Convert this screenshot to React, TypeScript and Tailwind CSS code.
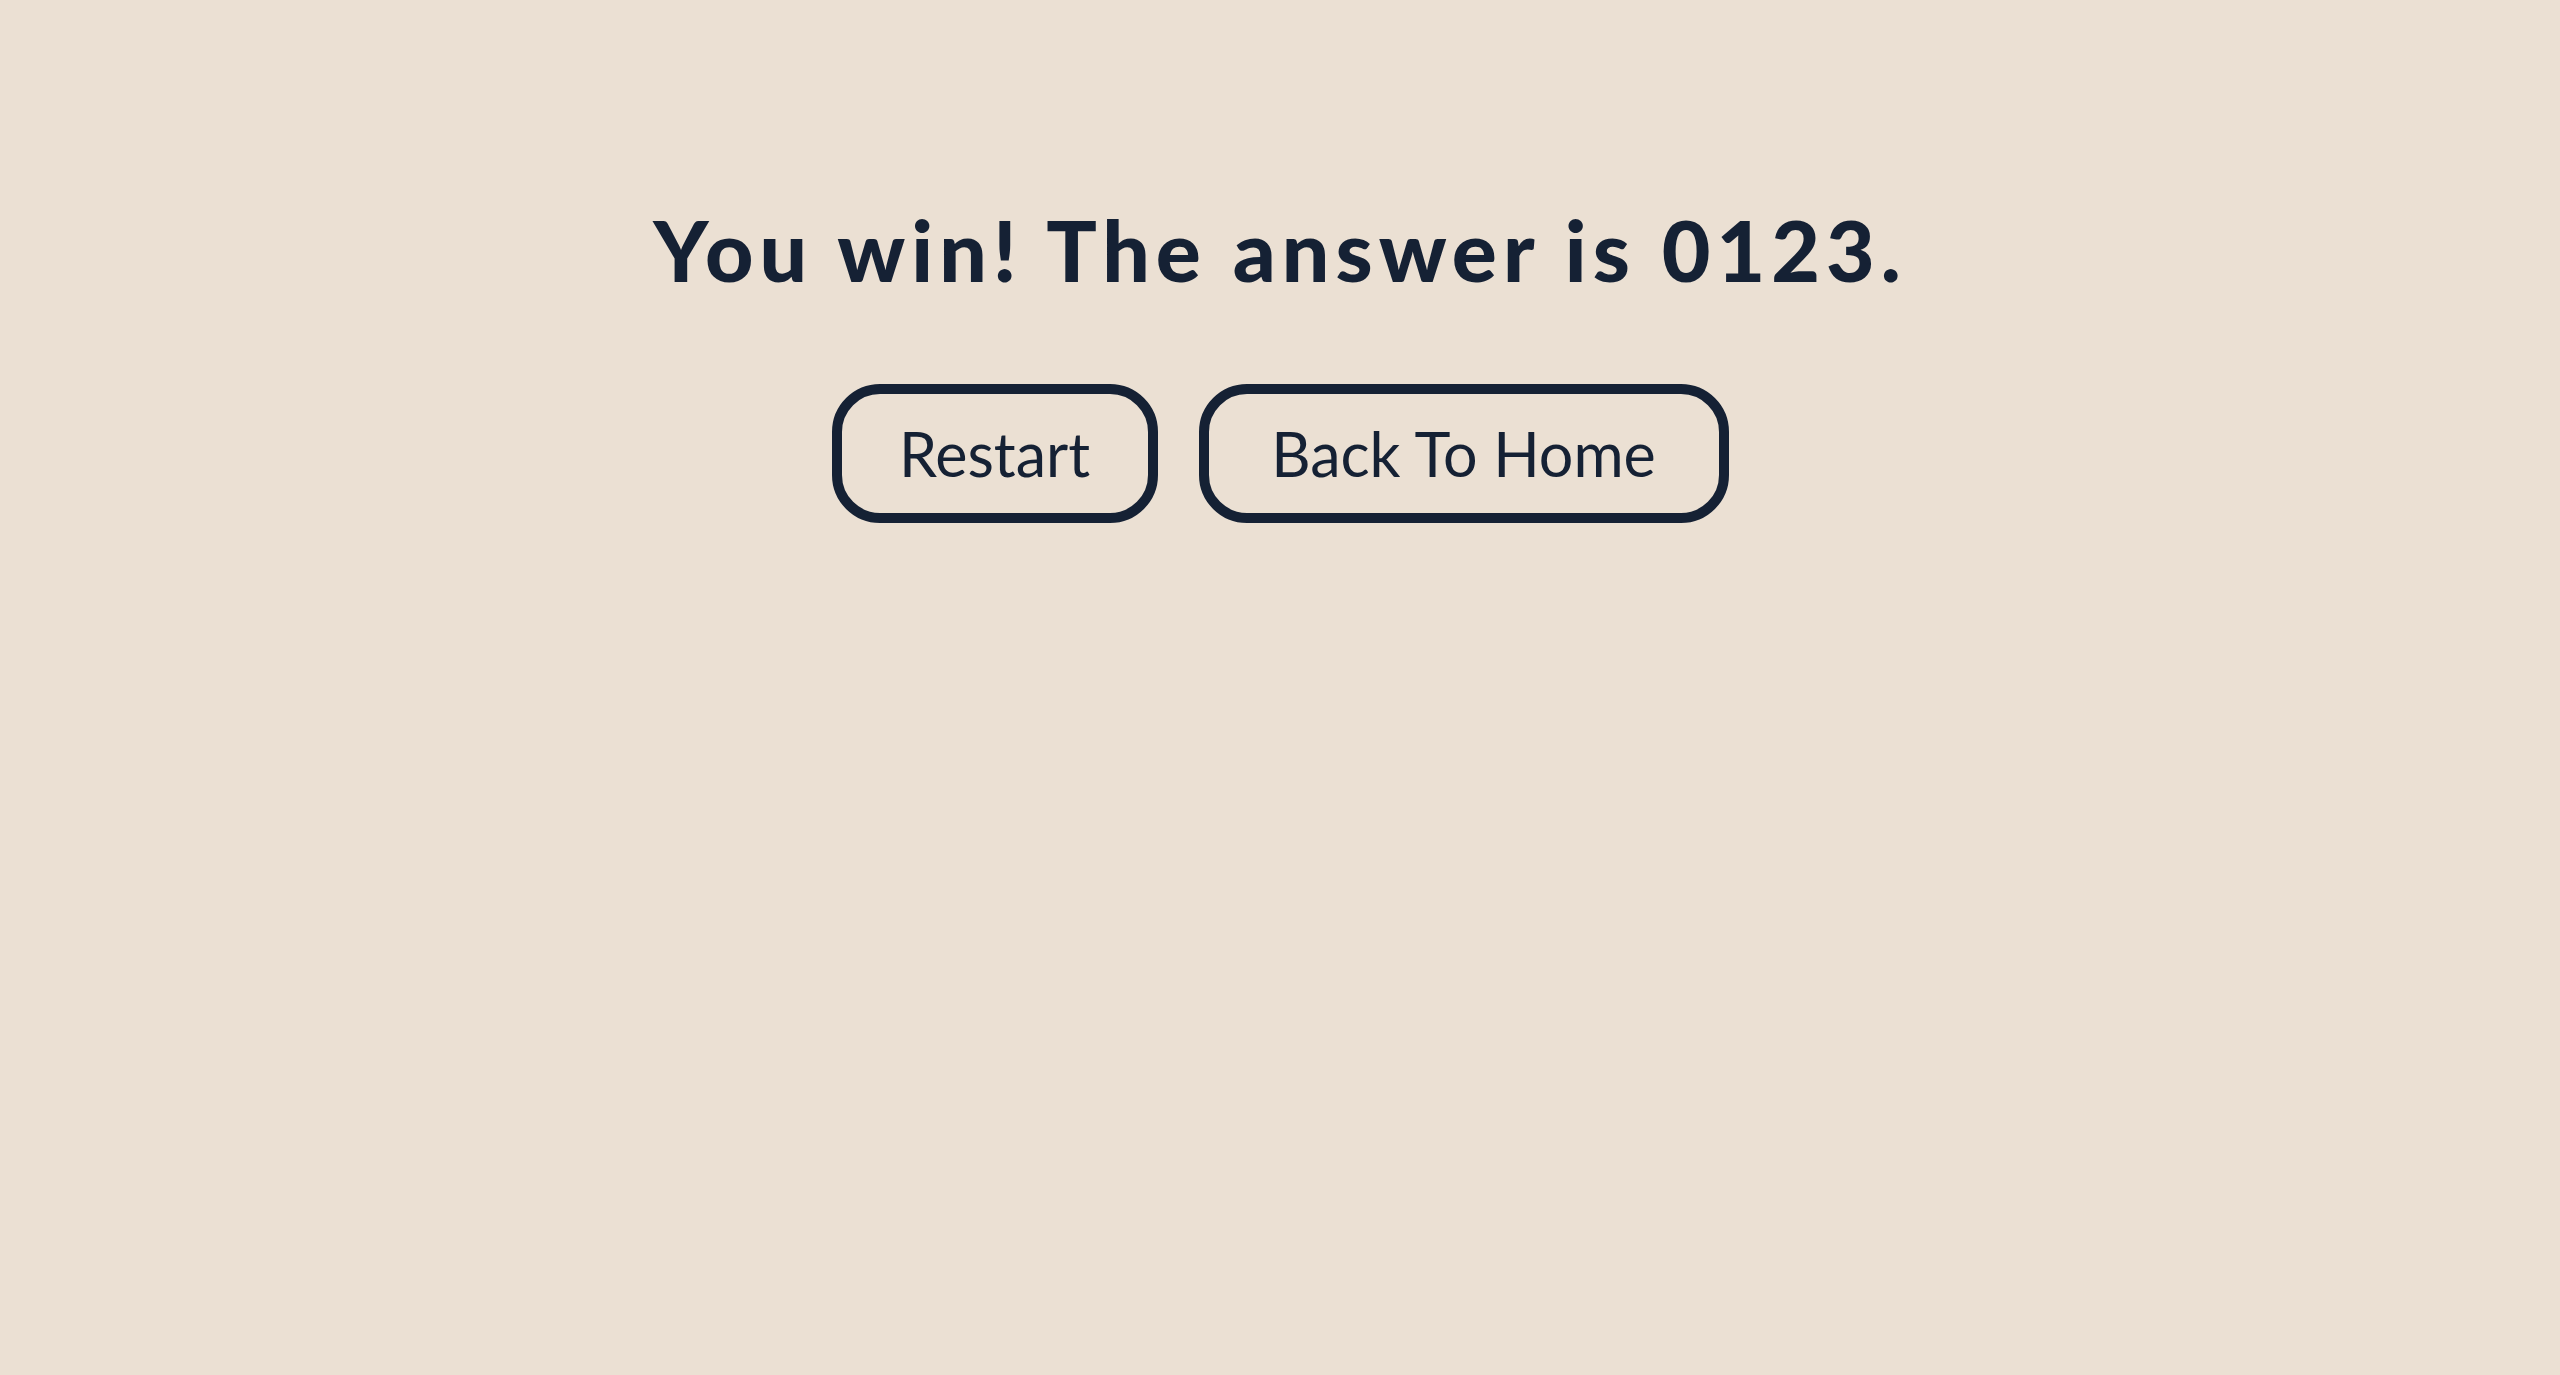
export default function App() {
  return (
    <div className="min-h-screen w-full bg-[#ebe0d3] text-[#152134] flex flex-col items-center pt-[208px] font-['Lato',sans-serif]">
      <h1 className="text-[84px] leading-none font-black tracking-[6px]">You win! The answer is 0123.</h1>
      <div className="flex gap-[41px] mt-[92px]">
        <button className="w-[326px] h-[139px] border-[10px] border-[#152134] rounded-[48px] text-[61px] leading-none">
          Restart
        </button>
        <button className="w-[530px] h-[139px] border-[10px] border-[#152134] rounded-[48px] text-[61px] leading-none">
          Back To Home
        </button>
      </div>
    </div>
  );
}
